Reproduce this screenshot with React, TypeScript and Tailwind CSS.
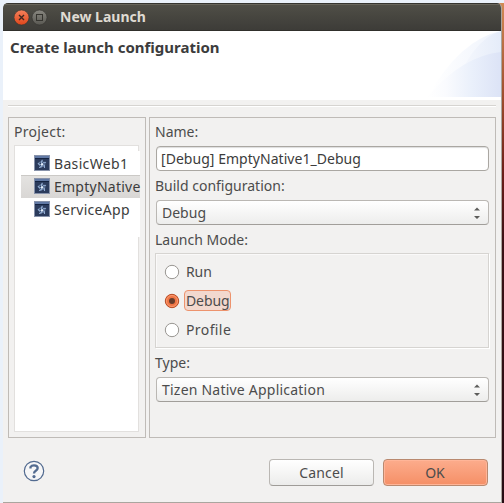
import React from "react";

const combo =
  "ml-px flex h-[25px] w-[333px] items-center justify-between rounded-[4px] border border-[#bab7b3] border-b-[#a19e9a] bg-gradient-to-b from-white to-[#ededec] pl-[5px] pr-[7px]";

function Arrows() {
  return (
    <svg width="8" height="14" viewBox="0 0 8 14" className="mt-px" fill="#5c5c5a">
      <path d="M1 4.5 L4 1.5 L7 4.5Z M1 10 L4 13 L7 10Z" />
    </svg>
  );
}

function ProjectIcon() {
  return (
    <svg width="16" height="16" viewBox="0 0 16 16" className="-mt-px shrink-0">
      <rect x=".5" y=".5" width="15" height="15" fill="#2b3b5c" stroke="#8792aa" />
      <rect x="1" y="1" width="14" height="2" fill="#6179a5" />
      <rect x="1" y="3" width="14" height="1" fill="#142341" />
      <g fill="none" stroke="#8fa9cf" strokeWidth="1.1">
        <path d="M8 9.5 Q6.5 7 8.5 5 M8 9.5 Q9.5 6.5 12 7.5 M8 9.5 Q11 9.5 10.5 13 M8 9.5 Q8 12.5 5 12.5 M8 9.5 Q5 10.5 4 8" />
        <path d="M5 7.5L8 6.5L11 8L10.5 11L7 12L5 10Z" strokeWidth=".6" />
      </g>
      <circle cx="8" cy="9.4" r="1.1" fill="#e3edf8" />
    </svg>
  );
}

function ProjectRow({ name, track, selected = false }: { name: string; track: string; selected?: boolean }) {
  return (
    <div
      className={
        "flex h-[23px] items-center pl-[13px] text-[#3c3c3c] " +
        (selected ? "bg-gradient-to-b from-[#e4e3e1] to-[#d9d7d5] shadow-[inset_0_1px_0_#cbc9c6]" : "")
      }
    >
      <ProjectIcon />
      <span className={"ml-[4px] whitespace-nowrap " + track}>{name}</span>
    </div>
  );
}

function Radio({ label, track, checked = false }: { label: string; track: string; checked?: boolean }) {
  return (
    <div className="flex h-[29px] items-center">
      <svg width="16" height="16" viewBox="0 0 16 16" className="shrink-0">
        <circle cx="8" cy="8" r="6.7" fill={checked ? "#ef7444" : "#fff"} stroke={checked ? "#b64d26" : "#989591"} strokeWidth="1" />
        {checked && <circle cx="8" cy="8" r="5.5" fill="none" stroke="#fa9a70" strokeWidth="1" />}
        {checked && <circle cx="8" cy="8" r="3" fill="#663c2c" />}
      </svg>
      <span
        className={
          "ml-[4px] flex h-[21px] items-center whitespace-nowrap rounded-[4px] border pl-px " +
          (checked ? "w-[47px] border-[#ed936d] bg-[#f2d8ce] " : "border-transparent ") +
          track
        }
      >
        {label}
      </span>
    </div>
  );
}

export default function App() {
  return (
    <div className="relative h-[503px] w-[504px] overflow-hidden bg-[#eaf1fa] pl-[3px] pt-[3px] font-['Noto_Sans','Open_Sans',sans-serif] text-[14px] leading-[20px] text-[#4c4c4c]">
      <div className="absolute right-0 top-[3px] h-[500px] w-[5px] bg-[linear-gradient(to_bottom,#d18a55,#9a4a2c_100px,#6b1e18_170px,#3a1015_240px,#260c13)]" />
      <div className="relative flex h-[500px] w-[499px] flex-col overflow-hidden rounded-t-[5px] border-b border-r border-[#aaa69f] bg-[#f2f1f0]">
        <header className="-mr-px flex h-[28px] shrink-0 items-center border-b border-t border-b-[#302f2b] border-t-[#35342f] bg-gradient-to-b from-[#504f47] to-[#3d3c38] pl-[11px] shadow-[inset_0_1px_0_#68655b]">
          <svg width="34" height="18" viewBox="0 0 34 18" className="shrink-0">
            <defs>
              <linearGradient id="close" x2="0" y2="1"><stop stopColor="#f4815c" /><stop offset="1" stopColor="#df461b" /></linearGradient>
              <linearGradient id="max" x2="0" y2="1"><stop stopColor="#888780" /><stop offset="1" stopColor="#595852" /></linearGradient>
            </defs>
            <circle cx="7.5" cy="9.5" r="7.5" fill="url(#close)" stroke="#34332f" strokeWidth=".6" />
            <path d="M5 7l5 5M10 7l-5 5" stroke="#3e2720" strokeWidth="1.4" />
            <circle cx="25.5" cy="9.5" r="7.5" fill="url(#max)" stroke="#34332f" strokeWidth=".6" />
            <rect x="22.5" y="6.5" width="6" height="6" fill="none" stroke="#35342f" />
          </svg>
          <h1 className="ml-[12px] whitespace-nowrap font-bold text-[#dfdbd2]">New Launch</h1>
        </header>
        <section className="flex h-[69px] shrink-0 justify-between bg-white pl-[7px]">
          <h2 className="mt-[6px] whitespace-nowrap text-[15px] font-bold text-[#3c3c3c]">Create launch configuration</h2>
          <svg width="74" height="66" viewBox="0 0 74 66" className="shrink-0">
            <defs>
              <linearGradient id="wave" gradientUnits="userSpaceOnUse" x1="5" x2="74" y1="0" y2="0"><stop stopColor="#fff" /><stop offset="1" stopColor="#eef3fc" /></linearGradient>
              <linearGradient id="wave1" gradientUnits="userSpaceOnUse" x1="24" x2="74" y1="0" y2="0"><stop stopColor="#fafbfe" /><stop offset="1" stopColor="#e5ecf9" /></linearGradient>
              <linearGradient id="wave2"><stop stopColor="#fff" /><stop offset=".25" stopColor="#fafbfe" /><stop offset=".6" stopColor="#eaf0fb" /><stop offset="1" stopColor="#dce3f6" /></linearGradient>
            </defs>
            <path d="M0 66 Q34 8 74 0V66Z" fill="url(#wave)" />
            <path d="M24 66 Q44 8 74 0V66Z" fill="url(#wave1)" />
            <path d="M0 66 Q35 25 74 21V66Z" fill="url(#wave2)" />
          </svg>
        </section>
        <div className="ml-[5px] mt-[5px] h-[2px] w-[488px] shrink-0 border-b border-t border-b-white border-t-[#d6d4d1]" />
        <main className="mt-[10px] flex h-[321px] shrink-0 gap-[3px] pl-[5px]">
          <section className="w-[138px] border border-[#bfbbb7] pl-[5px] pt-[4px]">
            <div className="h-[23px] tracking-[0.25px]">Project:</div>
            <div className="h-[287px] w-[125px] border border-[#e2e0de] bg-white pt-[5px]">
              <div className="h-[86px] w-[125px] bg-white pl-[6px] pt-px">
                <ProjectRow name="BasicWeb1" track="tracking-[0.33px]" />
                <ProjectRow name="EmptyNative" track="tracking-[0.25px]" selected />
                <ProjectRow name="ServiceApp" track="tracking-[0.3px]" />
              </div>
            </div>
          </section>
          <section className="w-[347px] border border-[#bfbbb7] pl-[5px] pt-[4px]">
            <div className="h-[24px]">Name:</div>
            <div className="ml-px flex h-[25px] w-[333px] items-center rounded-[4px] border border-[#aaa7a2] bg-white pl-[4px] text-[#3c3c3c] shadow-[inset_0_1px_1px_#ddd]">
              <span className="tracking-[0.04px]">[Debug] EmptyNative1_Debug</span>
            </div>
            <div className="h-[29px] pt-[5px]">Build configuration:</div>
            <div className={combo}><span>Debug</span><Arrows /></div>
            <div className="h-[28px] pt-[5px]">Launch Mode:</div>
            <div className="h-[95px] w-[334px] border border-[#d6d4d1] pl-[8px] pt-[3px] shadow-[inset_1px_1px_0_#faf9f9,1px_1px_0_#fff]">
              <Radio label="Run" track="tracking-[-0.1px]" />
              <Radio label="Debug" track="tracking-[-0.1px]" checked />
              <Radio label="Profile" track="tracking-[0.4px]" />
            </div>
            <div className="h-[29px] pt-[5px]">Type:</div>
            <div className={combo}><span className="tracking-[0.22px]">Tizen Native Application</span><Arrows /></div>
          </section>
        </main>
        <footer className="mt-[21px] flex shrink-0 items-start pl-[20px]">
          <svg width="22" height="22" viewBox="0 0 22 22" className="mt-px">
            <circle cx="11" cy="11" r="9.7" fill="#f6f6f7" stroke="#536b90" strokeWidth="1.2" />
            <path d="M7.5 8.5V7Q8.5 5.3 11 5.3Q14.7 5.3 14.7 8Q14.7 9.5 12.8 10.7Q11 11.8 11 13.5" fill="none" stroke="#536b90" strokeWidth="2.3" />
            <circle cx="11" cy="16.6" r="1.6" fill="#536b90" />
          </svg>
          <button className="ml-[224px] h-[27px] w-[105px] rounded-[4px] border border-[#bab7b3] border-b-[#9f9c98] bg-gradient-to-b from-white to-[#ececeb] tracking-[0.15px]">Cancel</button>
          <button className="ml-[9px] h-[27px] w-[105px] rounded-[4px] border border-[#b9896f] bg-gradient-to-b from-[#fcac8c] to-[#f58f66] pr-px shadow-[inset_0_0_0_1px_#ffb598]">OK</button>
        </footer>
      </div>
    </div>
  );
}
